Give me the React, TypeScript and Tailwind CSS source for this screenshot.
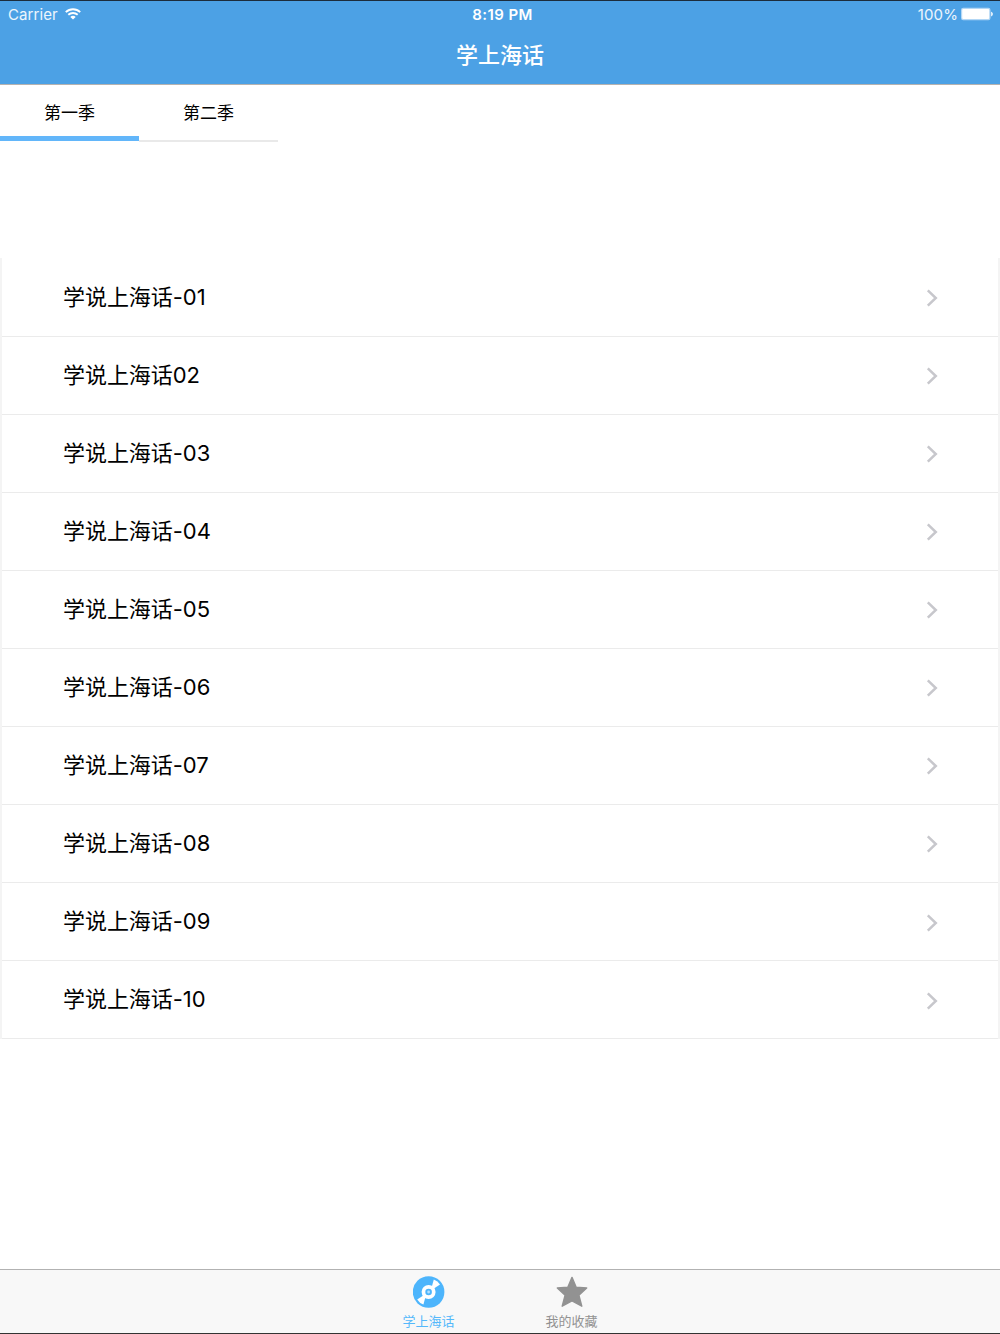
const lessons = [
  '学说上海话-01',
  '学说上海话02',
  '学说上海话-03',
  '学说上海话-04',
  '学说上海话-05',
  '学说上海话-06',
  '学说上海话-07',
  '学说上海话-08',
  '学说上海话-09',
  '学说上海话-10',
];

function WifiIcon() {
  return (
    <svg width="16" height="12" viewBox="0 0 16 12" fill="none" stroke="white" strokeWidth="1.9">
      <path d="M0.8 4.1 C4.8 0.2 11.2 0.2 15.2 4.1" />
      <path d="M3.3 6.8 C6 4.3 10 4.3 12.7 6.8" />
      <path d="M8 11.6 L5.3 8.9 C6.8 7.5 9.2 7.5 10.7 8.9 Z" fill="white" stroke="none" />
    </svg>
  );
}

function BatteryIcon() {
  return (
    <svg width="32" height="14" viewBox="0 0 32 14">
      <rect x="0" y="0.8" width="29.5" height="12.4" rx="2.2" fill="#b3d7f5" />
      <rect x="1.2" y="2" width="27" height="10" rx="1" fill="white" />
      <path d="M30.2 4.8 C32.3 5.4 32.3 8.8 30.2 9.4 Z" fill="white" />
    </svg>
  );
}

function Chevron() {
  return (
    <svg width="12" height="18" viewBox="0 0 12 18" fill="none" stroke="#c7c7cc" strokeWidth="2.5">
      <path d="M1.8 1.3 L9.8 9 L1.8 16.7" />
    </svg>
  );
}

function DiscIcon() {
  return (
    <svg width="32" height="32" viewBox="0 0 32 32">
      <circle cx="15.6" cy="16" r="15.8" fill="#4db5fc" />
      <path d="M18.6 11.4 L20.8 3.6 Q24.8 5 27 8.6 L20.2 13 Z" fill="white" />
      <path d="M12.6 20.6 L10.4 28.4 Q6.4 27 4.2 23.4 L11 19 Z" fill="white" />
      <circle cx="15.6" cy="16" r="7" fill="white" />
      <circle cx="15.6" cy="16" r="3.3" fill="#4db5fc" />
      <circle cx="15.6" cy="16" r="1.4" fill="#b5e0fe" />
    </svg>
  );
}

function StarIcon() {
  return (
    <svg width="32" height="32" viewBox="0 0 32 32">
      <path
        d="M16 1.4 L20.2 11.2 L30.7 12 L22.9 19.2 L25.8 30.2 L16 25 L6.2 30.2 L9.1 19.2 L1.3 12 L11.8 11.2 Z"
        fill="#929292"
        stroke="#929292"
        strokeWidth="1.4"
        strokeLinejoin="round"
      />
    </svg>
  );
}

export default function App() {
  return (
    <div className="flex h-[1334px] w-[1000px] flex-col overflow-hidden bg-white font-['Inter','Noto_Sans_CJK_SC',sans-serif] text-black">
      <header className="h-[85px] shrink-0 border-t border-b border-t-[#1c2c3c] border-b-[#b5b2b0] bg-[#4ca1e5] text-white">
        <div className="grid h-[26px] grid-cols-3 items-center pr-[7px] pl-2 text-[15px] leading-[25px]">
          <div className="flex items-center gap-[7px]">
            <span className="pt-px tracking-[0.1px] text-white/90">Carrier</span>
            <WifiIcon />
          </div>
          <span className="pt-px pl-1 text-center font-semibold tracking-[0.4px]">8:19 PM</span>
          <div className="flex items-center justify-end gap-[3px]">
            <span className="pt-px tracking-[0.1px] text-white/90">100%</span>
            <BatteryIcon />
          </div>
        </div>
        <h1 className="mt-3 text-center text-[22px] leading-[32px] font-medium">学上海话</h1>
      </header>

      <nav className="flex h-[57px] shrink-0 text-[17px] leading-[26px]">
        <button className="flex h-[56px] w-[139px] justify-center border-b-[5px] border-[#62b6fa] pt-[15px]">第一季</button>
        <button className="flex h-[57px] w-[139px] justify-center border-b-2 border-[#e9e9e9] pt-[15px]">第二季</button>
      </nav>

      <main className="flex-1 pt-[116px]">
        <ul className="border-x-2 border-[#f4f4f4] pt-[0.5px]">
          {lessons.map((lesson) => (
            <li
              key={lesson}
              className="flex h-[78.1px] items-center justify-between border-b border-[#ebebeb] pr-[60px] pl-[61px] text-[22px]"
            >
              <span className="tracking-[-0.05px]">{lesson}</span>
              <div className="pt-[1.5px]">
                <Chevron />
              </div>
            </li>
          ))}
        </ul>
      </main>

      <footer className="flex h-[65px] shrink-0 justify-center border-t border-b border-t-[#b2b2b2] border-b-[#333333] bg-[#f8f8f8] text-[13px] leading-[18px]">
        <div className="flex w-[143px] flex-col items-center pt-1.5 text-[#55b8fb]">
          <DiscIcon />
          <span className="mt-1">学上海话</span>
        </div>
        <div className="flex w-[143px] flex-col items-center pt-1.5 text-[#929292]">
          <StarIcon />
          <span className="mt-1">我的收藏</span>
        </div>
      </footer>
    </div>
  );
}
